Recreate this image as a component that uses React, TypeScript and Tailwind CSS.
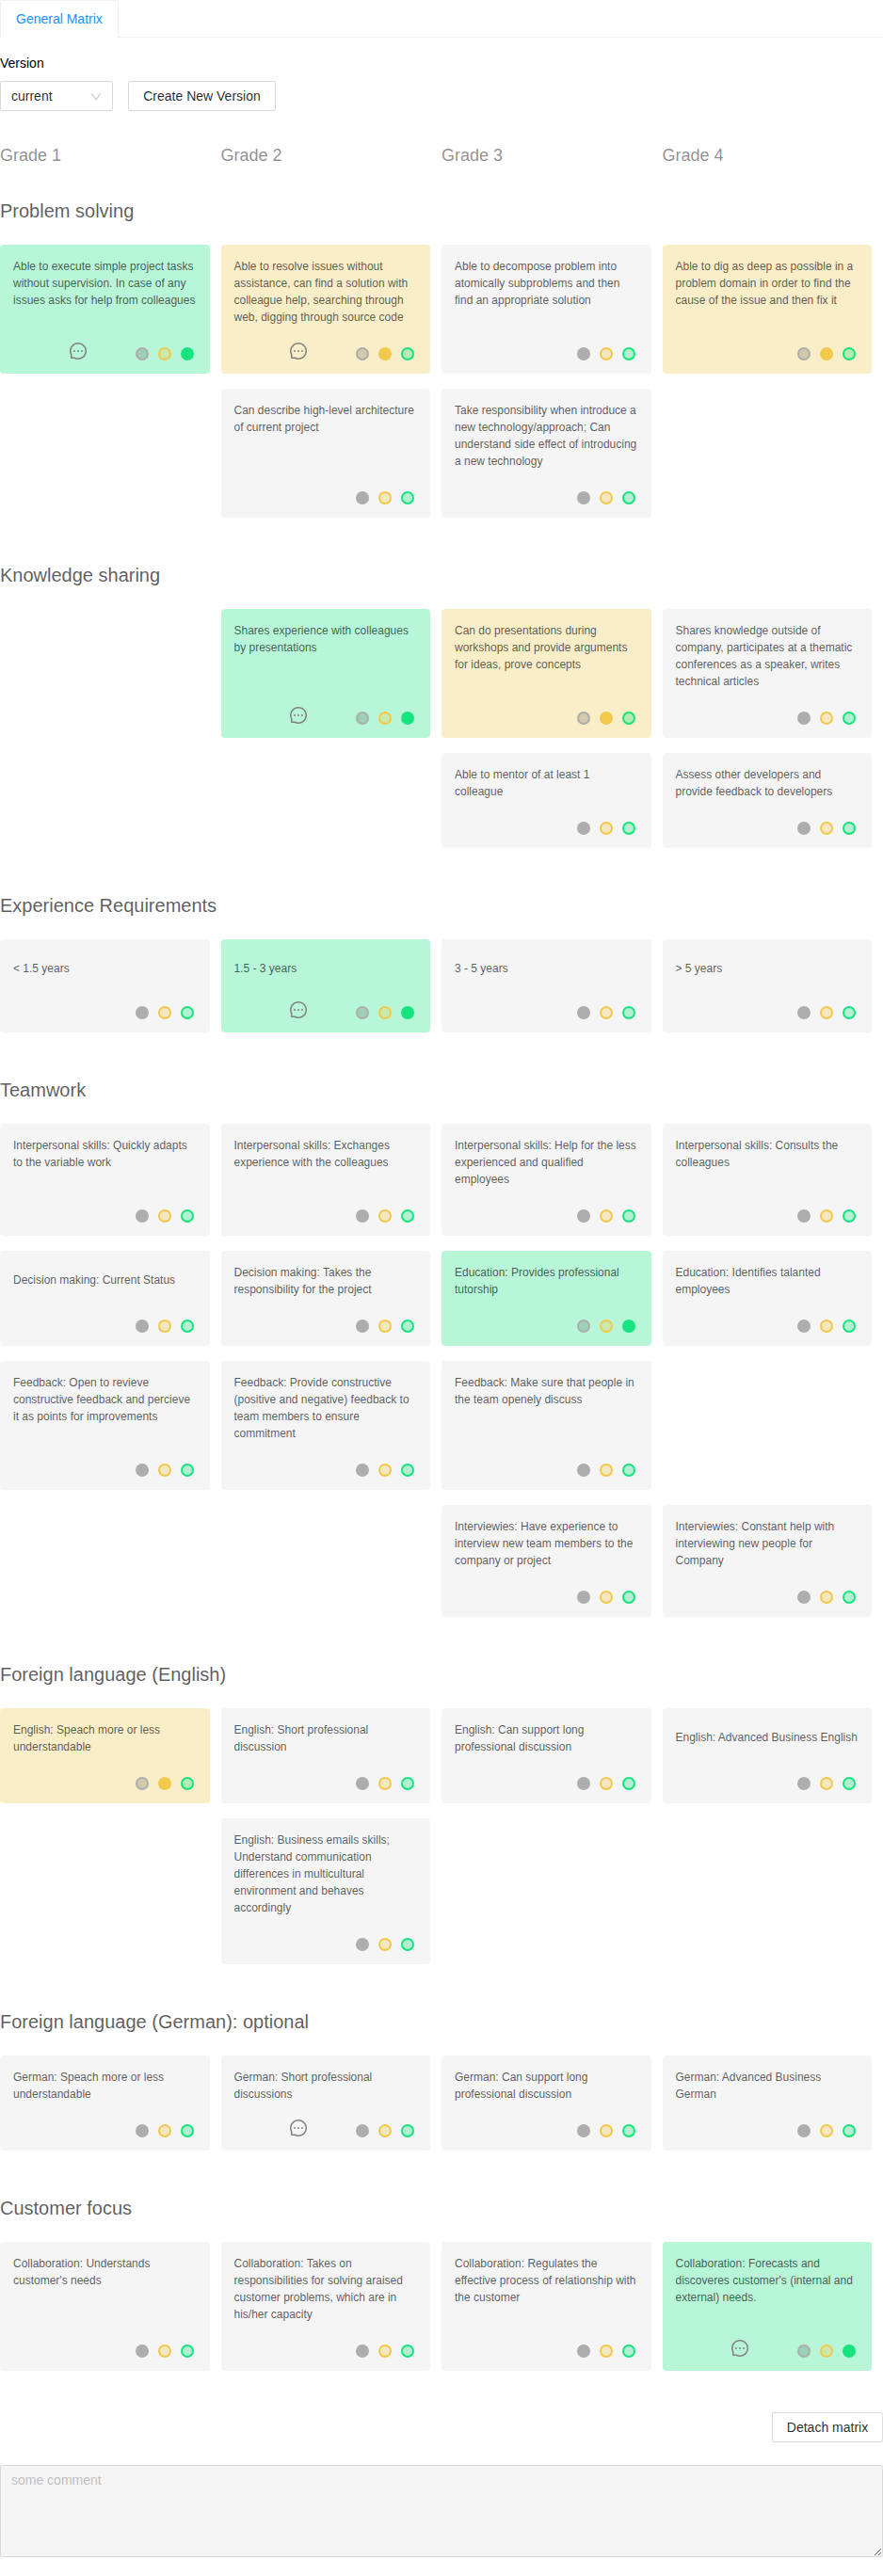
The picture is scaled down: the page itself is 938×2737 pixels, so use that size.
import { AiOutlineDown, AiOutlineMessage } from "react-icons/ai";

type Level = "none" | "partial" | "full";

interface Skill {
  text: string;
  level: Level;
  comment: boolean;
}

interface Group {
  title: string;
  rows: (Skill | null)[][];
}

const s = (text: string, level: Level = "none", comment = false): Skill => ({ text, level, comment });

const grades = ["Grade 1", "Grade 2", "Grade 3", "Grade 4"];

const groups: Group[] = [
  {
    title: "Problem solving",
    rows: [
      [
        s("Able to execute simple project tasks without supervision. In case of any issues asks for help from colleagues", "full", true),
        s("Able to resolve issues without assistance, can find a solution with colleague help, searching through web, digging through source code", "partial", true),
        s("Able to decompose problem into atomically subproblems and then find an appropriate solution"),
        s("Able to dig as deep as possible in a problem domain in order to find the cause of the issue and then fix it", "partial"),
      ],
      [
        null,
        s("Can describe high-level architecture of current project"),
        s("Take responsibility when introduce a new technology/approach; Can understand side effect of introducing a new technology"),
        null,
      ],
    ],
  },
  {
    title: "Knowledge sharing",
    rows: [
      [
        null,
        s("Shares experience with colleagues by presentations", "full", true),
        s("Can do presentations during workshops and provide arguments for ideas, prove concepts", "partial"),
        s("Shares knowledge outside of company, participates at a thematic conferences as a speaker, writes technical articles"),
      ],
      [
        null,
        null,
        s("Able to mentor of at least 1 colleague"),
        s("Assess other developers and provide feedback to developers"),
      ],
    ],
  },
  {
    title: "Experience Requirements",
    rows: [[s("< 1.5 years"), s("1.5 - 3 years", "full", true), s("3 - 5 years"), s("> 5 years")]],
  },
  {
    title: "Teamwork",
    rows: [
      [
        s("Interpersonal skills: Quickly adapts to the variable work"),
        s("Interpersonal skills: Exchanges experience with the colleagues"),
        s("Interpersonal skills: Help for the less experienced and qualified employees"),
        s("Interpersonal skills: Consults the colleagues"),
      ],
      [
        s("Decision making: Current Status"),
        s("Decision making: Takes the responsibility for the project"),
        s("Education: Provides professional tutorship", "full"),
        s("Education: Identifies talanted employees"),
      ],
      [
        s("Feedback: Open to revieve constructive feedback and percieve it as points for improvements"),
        s("Feedback: Provide constructive (positive and negative) feedback to team members to ensure commitment"),
        s("Feedback: Make sure that people in the team openely discuss"),
        null,
      ],
      [
        null,
        null,
        s("Interviewies: Have experience to interview new team members to the company or project"),
        s("Interviewies: Constant help with interviewing new people for Company"),
      ],
    ],
  },
  {
    title: "Foreign language (English)",
    rows: [
      [
        s("English: Speach more or less understandable", "partial"),
        s("English: Short professional discussion"),
        s("English: Can support long professional discussion"),
        s("English: Advanced Business English"),
      ],
      [
        null,
        s("English: Business emails skills; Understand communication differences in multicultural environment and behaves accordingly"),
        null,
        null,
      ],
    ],
  },
  {
    title: "Foreign language (German): optional",
    rows: [
      [
        s("German: Speach more or less understandable"),
        s("German: Short professional discussions", "none", true),
        s("German: Can support long professional discussion"),
        s("German: Advanced Business German"),
      ],
    ],
  },
  {
    title: "Customer focus",
    rows: [
      [
        s("Collaboration: Understands customer's needs"),
        s("Collaboration: Takes on responsibilities for solving araised customer problems, which are in his/her capacity"),
        s("Collaboration: Regulates the effective process of relationship with the customer"),
        s("Collaboration: Forecasts and discoveres customer's (internal and external) needs.", "full", true),
      ],
    ],
  },
];

const cardColor: Record<Level, string> = {
  none: "bg-[#f5f5f5]",
  partial: "bg-[#faeec9]",
  full: "bg-[#b8f6d8]",
};

const dots: { level: Level; border: string; on: string; off: string }[] = [
  { level: "none", border: "border-[#adadad]", on: "bg-[#adadad]", off: "bg-black/15" },
  { level: "partial", border: "border-[#f2c94c]", on: "bg-[#f2c94c]", off: "bg-[#f2c94c]/30" },
  { level: "full", border: "border-[#16e47f]", on: "bg-[#16e47f]", off: "bg-[#16e47f]/30" },
];

function SkillCard({ skill }: { skill: Skill }) {
  return (
    <div className={`mr-3 flex flex-col rounded-sm py-3.5 pl-3.5 ${cardColor[skill.level]}`}>
      <div className="flex-1 pr-3.5 text-xs leading-[18px] text-black/65">
        <p className="flex min-h-[34px] items-center">{skill.text}</p>
      </div>
      <div className="mt-[18px] flex h-[19px] items-end justify-end pr-[17px]">
        {skill.comment && (
          <AiOutlineMessage viewBox="64 64 896 896" className="mr-[52px] mb-px size-[18px] text-[#808080]" />
        )}
        <div className="flex gap-2.5">
          {dots.map((d) => (
            <span
              key={d.level}
              className={`size-3.5 rounded-full border-2 ${d.border} ${d.level === skill.level ? d.on : d.off}`}
            />
          ))}
        </div>
      </div>
    </div>
  );
}

export default function App() {
  return (
    <div className="min-h-[2737px] bg-white font-['Liberation_Sans',Arial,sans-serif] text-sm text-black/85">
      <div className="flex h-10">
        <div className="w-[126px] rounded-t-xs border border-b-0 border-[#f0f0f0] pt-2 pl-4 leading-[22px] text-[#1890ff]">
          General Matrix
        </div>
        <div className="flex-1 border-b border-[#f0f0f0]" />
      </div>

      <div className="mt-4 leading-[22px] text-black">Version</div>
      <div className="mt-2 flex gap-4">
        <div className="flex h-8 w-[120px] items-center justify-between rounded-xs border border-[#d9d9d9] px-[11px]">
          <span>current</span>
          <AiOutlineDown viewBox="64 64 896 896" className="mt-0.5 size-3 text-black/25" />
        </div>
        <button className="h-8 w-[157px] rounded-xs border border-[#d9d9d9] bg-white">Create New Version</button>
      </div>

      <div className="mt-[33px] grid grid-cols-4 text-lg leading-[28px] text-black/45">
        {grades.map((g) => (
          <div key={g}>{g}</div>
        ))}
      </div>

      <div className="mt-[31px] flex flex-col gap-[47px]">
        {groups.map((g) => (
          <section key={g.title}>
            <h2 className="text-xl leading-[28px] text-black/65">{g.title}</h2>
            <div className="mt-[22px] grid gap-y-4">
              {g.rows.map((row, i) => (
                <div key={i} className="grid grid-cols-4">
                  {row.map((skill, j) => (skill ? <SkillCard key={j} skill={skill} /> : <div key={j} />))}
                </div>
              ))}
            </div>
          </section>
        ))}
      </div>

      <div className="mt-11 flex justify-end">
        <button className="h-8 w-[118px] rounded-xs border border-[#d9d9d9] bg-white">Detach matrix</button>
      </div>
      <textarea
        className="mt-6 block h-[98px] w-full rounded-xs border border-[#d9d9d9] bg-[#f5f5f5] px-[11px] py-1 leading-[22px] placeholder:text-[#bfbfbf]"
        placeholder="some comment"
      />
    </div>
  );
}
